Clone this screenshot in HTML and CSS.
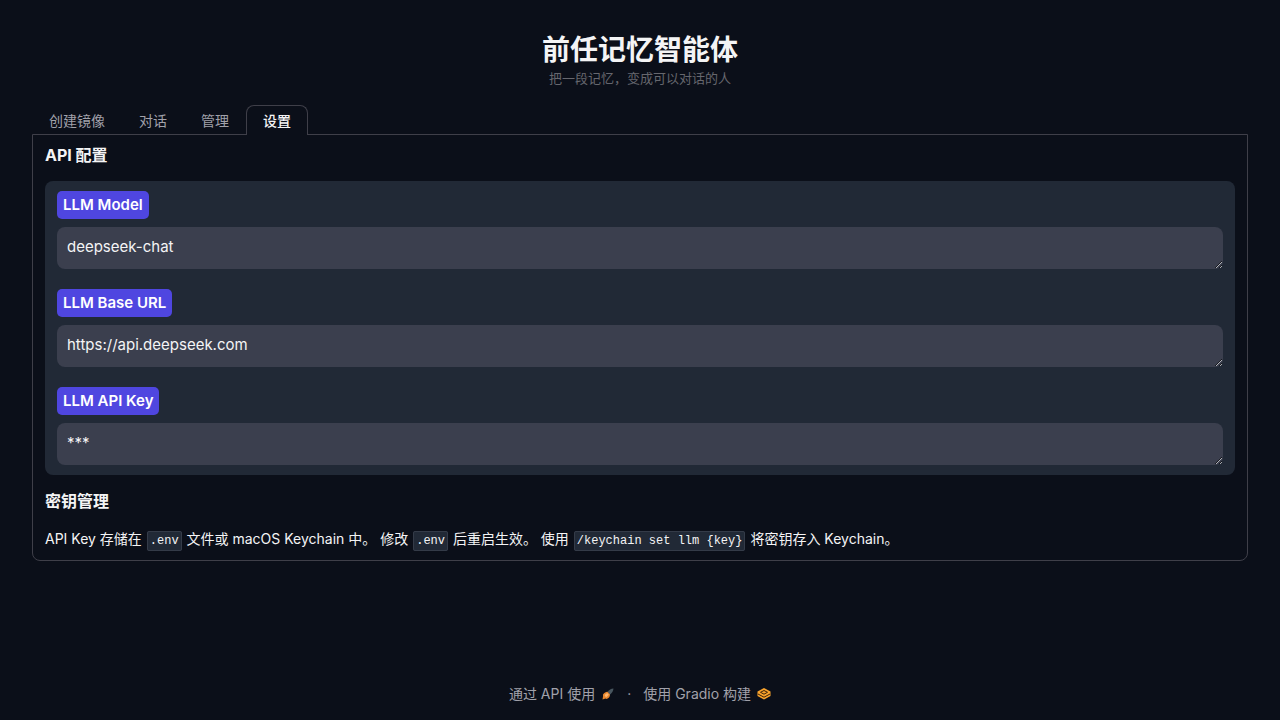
FILE: index.html
```html
<!DOCTYPE html>
<html lang="zh-CN">
<head>
<meta charset="UTF-8" />
<meta name="viewport" content="width=device-width, initial-scale=1.0" />
<title>前任记忆智能体</title>
<link rel="stylesheet" href="styles.css">
</head>
<body>
  <header class="header">
    <h1>前任记忆智能体</h1>
    <p>把一段记忆，变成可以对话的人</p>
  </header>

  <main>
    <div class="tabs" role="tablist">
      <button class="tab" role="tab">创建镜像</button>
      <button class="tab" role="tab">对话</button>
      <button class="tab" role="tab">管理</button>
      <button class="tab selected" role="tab" aria-selected="true">设置</button>
    </div>

    <section class="panel" role="tabpanel">
      <h2>API 配置</h2>
      <div class="form">
        <div class="field">
          <label for="model">LLM Model</label>
          <textarea id="model" rows="1">deepseek-chat</textarea>
        </div>
        <div class="field">
          <label for="baseUrl">LLM Base URL</label>
          <textarea id="baseUrl" rows="1" spellcheck="false">https://api.deepseek.com</textarea>
        </div>
        <div class="field">
          <label for="apiKey">LLM API Key</label>
          <textarea id="apiKey" rows="1">***</textarea>
        </div>
      </div>

      <h2>密钥管理</h2>
      <p class="note">API Key 存储在 <code>.env</code> 文件或 macOS Keychain 中。 修改 <code>.env</code> 后重启生效。 使用 <code>/keychain set llm {key}</code> 将密钥存入 Keychain。</p>
    </section>
  </main>

  <footer class="footer">
    <a href="#api">通过 API 使用
      <svg class="icon" viewBox="0 0 14 14" aria-hidden="true">
        <path d="M6.500 5C8 2.800 10 1.800 12.500 1.500C12.300 4 11 6.200 8.500 8Z" fill="#48565f" />
        <path d="M2 7.500C3.500 5.500 5 4.700 6.500 4.800L9 7.500C9 9.500 8 11 5.500 12L4.500 11.500L1.500 12.500L2 9.500Z" fill="#e8862e" />
        <path d="M3.500 8L6.200 6L7.800 7.800L5 10.500Z" fill="#ffb870" />
      </svg>
    </a>
    <span>·</span>
    <a href="#gradio">使用 Gradio 构建
      <svg class="icon" viewBox="0 0 14 14" aria-hidden="true">
        <path d="M7 1L13.500 4.500V9L7 12.500L0.500 9V4.500Z" fill="#f9a32c" />
        <path d="M7 3.500L10.500 5.300L7 7.200L3.500 5.300Z" fill="#f9a32c" stroke="#3a220b" stroke-width="1" />
        <path d="M1 7L7 10.200L13 7" fill="none" stroke="#3a220b" stroke-width="1" />
      </svg>
    </a>
  </footer>
</body>
</html>
```
FILE: styles.css
```css
* { box-sizing: border-box; }
body {
  font-family: Inter, "Noto Sans CJK SC", sans-serif;
  font-size: 14px;
  line-height: 20px;
  background: #0b0f19;
  color: #f4f4f5;
  margin: 0;
  padding: 32px 32px 16px;
  display: flex;
  flex-direction: column;
  min-height: 100vh;
}
h1, h2, p { margin: 0; }

/* Header */
.header { text-align: center; }
.header h1 {
  font-size: 28px;
  line-height: 36px;
}
.header p {
  font-size: 13px;
  color: #66676e;
}

/* Tabs */
.tabs {
  display: flex;
  margin-top: 17px;
}
.tab {
  font: inherit;
  color: #a1a1aa;
  background: none;
  border: 1px solid transparent;
  border-bottom: 0;
  border-radius: 8px 8px 0 0;
  padding: 5px 16px;
  height: 30px;
  cursor: pointer;
}
.tab.selected {
  position: relative;
  color: #f4f4f5;
  font-weight: 500;
  background: #0b0f19;
  border-color: #3f3f49;
}
.panel {
  border: 1px solid #3f3f49;
  border-radius: 0 0 8px 8px;
  margin-top: -1px;
  padding: 8px 12px 7px;
}
h2 {
  font-size: 16px;
  line-height: 24px;
}

/* Form */
.form {
  background: #212936;
  border-radius: 8px;
  margin: 14px 0;
  padding: 10px 12px;
  display: flex;
  flex-direction: column;
  gap: 20px;
}
.field {
  display: flex;
  flex-direction: column;
  align-items: flex-start;
  gap: 8px;
}
label {
  font-size: 15px;
  font-weight: 600;
  background: #4f46e0;
  color: #fff;
  border-radius: 5px;
  padding: 4px 6px;
}
textarea {
  display: block;
  width: 100%;
  height: 42px;
  font: inherit;
  font-size: 15px;
  color: #f4f4f5;
  background: #3b3f4e;
  border: 0;
  border-radius: 8px;
  padding: 10px;
  resize: vertical;
}

/* Note */
.note {
  margin-top: 14px;
  line-height: 24px;
}
code {
  font-family: "Liberation Mono", monospace;
  font-size: 12px;
  background: #212936;
  border: 1px solid #343b48;
  border-radius: 2px;
  padding: 2px;
  margin: 0 1px;
}

/* Footer */
.footer {
  margin-top: auto;
  display: flex;
  justify-content: center;
  gap: 12px;
  color: #a1a1aa;
}
.footer a {
  display: flex;
  align-items: center;
  gap: 6px;
  color: inherit;
  text-decoration: none;
}
.icon {
  width: 14px;
  height: 14px;
}
```
